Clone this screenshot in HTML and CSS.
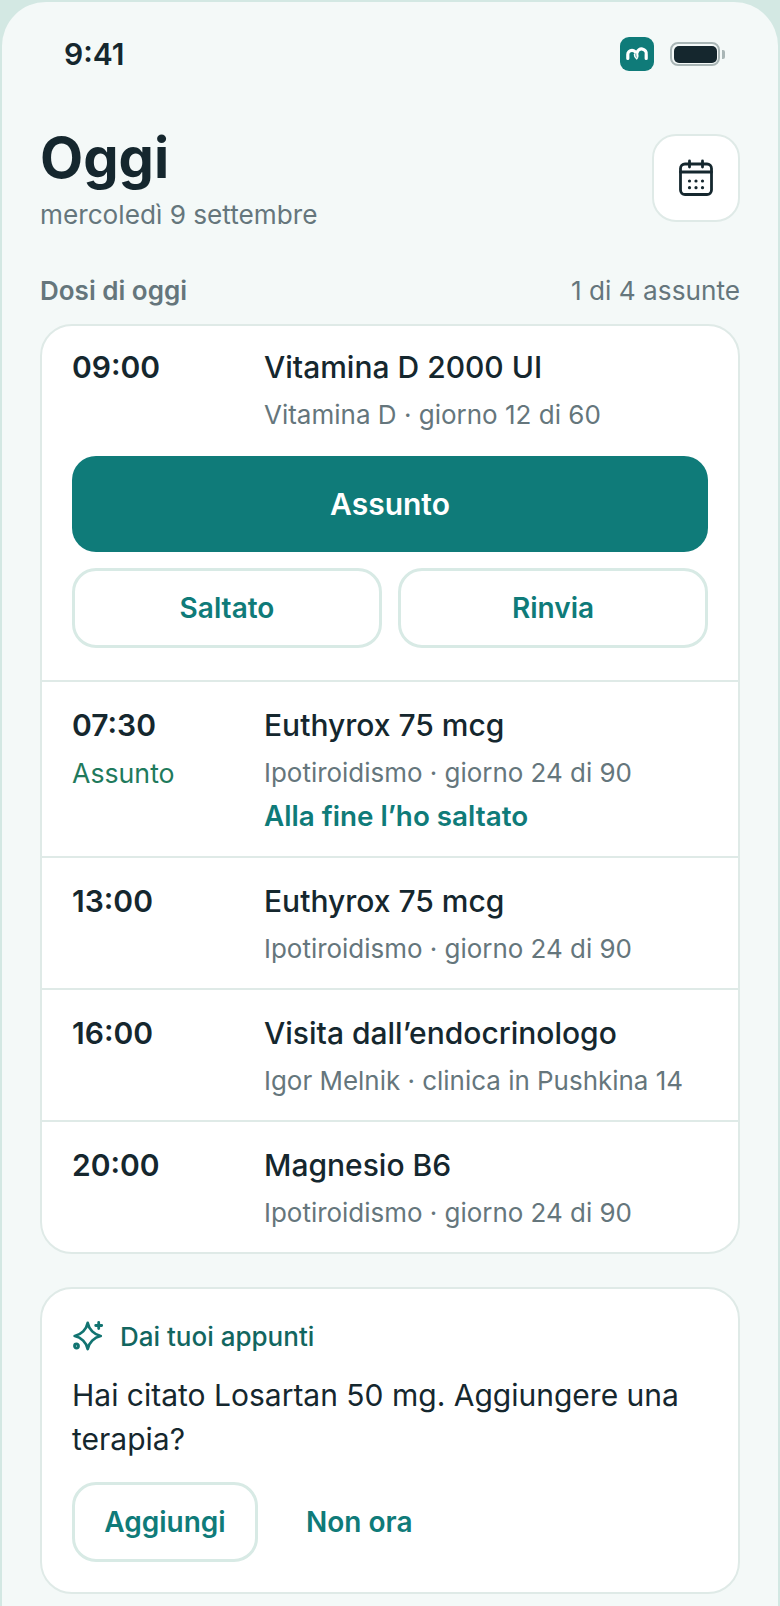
FILE: index.html
```html
<!DOCTYPE html>
<html lang="it">
<head>
    <meta charset="UTF-8">
    <meta name="viewport" content="width=device-width, initial-scale=1.0">
    <title>Oggi</title>
    <link rel="stylesheet" href="styles.css">
</head>
<body>
    <div class="phone">
        <div class="status-bar">
            <span class="clock">9:41</span>
            <div class="status-icons">
                <span class="app-badge">
                    <svg width="24" height="16" viewBox="0 0 24 16" fill="none" stroke="#fff" stroke-width="3.200" stroke-linecap="round">
                        <path d="M2.800 12.500V8.500a4.200 4.200 0 0 1 8.400 0"/>
                        <path d="M12 6.800a4.600 4.600 0 0 1 9.200 1.700v4"/>
                        <path d="M9.400 8.500c0 2 .8 3.400 2.300 4.300 1.200-1.300 1.500-3 .8-5" fill="#fff" stroke-width="1.400"/>
                        <path d="M10.800 7.800c-.1 1.500.1 2.500.7 3.400" stroke="#0f7b79" stroke-width=".8"/>
                    </svg>
                </span>
                <span class="battery"><span class="battery-fill"></span></span>
                <span class="battery-cap"></span>
            </div>
        </div>

        <header class="page-head">
            <div>
                <h1>Oggi</h1>
                <p class="date">mercoledì 9 settembre</p>
            </div>
            <button class="calendar-btn" aria-label="Calendario">
                <svg width="36" height="38" viewBox="0 0 36 38" fill="none" stroke="#15272e" stroke-width="2.800" stroke-linecap="round">
                    <rect x="2.500" y="5" width="31" height="30.500" rx="4.500"/>
                    <path d="M2.500 13h31"/>
                    <path d="M11.500 2v6M24.500 2v6"/>
                    <g fill="#15272e" stroke="none">
                        <circle cx="11.500" cy="22" r="1.600"/><circle cx="18" cy="22" r="1.600"/><circle cx="24.500" cy="22" r="1.600"/>
                        <circle cx="11.500" cy="28.700" r="1.600"/><circle cx="18" cy="28.700" r="1.600"/><circle cx="24.500" cy="28.700" r="1.600"/>
                    </g>
                </svg>
            </button>
        </header>

        <div class="section-head">
            <span class="section-title">Dosi di oggi</span>
            <span class="section-count">1 di 4 assunte</span>
        </div>

        <section class="card doses">
            <div class="dose dose-active">
                <div class="dose-row">
                    <div class="dose-time"><strong>09:00</strong></div>
                    <div class="dose-info">
                        <div class="dose-name">Vitamina D 2000 UI</div>
                        <div class="dose-sub">Vitamina D · giorno 12 di 60</div>
                    </div>
                </div>
                <button class="btn-primary">Assunto</button>
                <div class="btn-pair">
                    <button class="btn-outline">Saltato</button>
                    <button class="btn-outline">Rinvia</button>
                </div>
            </div>
            <div class="dose dose-row">
                <div class="dose-time">
                    <strong>07:30</strong>
                    <span class="taken">Assunto</span>
                </div>
                <div class="dose-info">
                    <div class="dose-name">Euthyrox 75 mcg</div>
                    <div class="dose-sub">Ipotiroidismo · giorno 24 di 90</div>
                    <a class="undo-link">Alla fine l’ho saltato</a>
                </div>
            </div>
            <div class="dose dose-row">
                <div class="dose-time"><strong>13:00</strong></div>
                <div class="dose-info">
                    <div class="dose-name">Euthyrox 75 mcg</div>
                    <div class="dose-sub">Ipotiroidismo · giorno 24 di 90</div>
                </div>
            </div>
            <div class="dose dose-row">
                <div class="dose-time"><strong>16:00</strong></div>
                <div class="dose-info">
                    <div class="dose-name">Visita dall’endocrinologo</div>
                    <div class="dose-sub">Igor Melnik · clinica in Pushkina 14</div>
                </div>
            </div>
            <div class="dose dose-row">
                <div class="dose-time"><strong>20:00</strong></div>
                <div class="dose-info">
                    <div class="dose-name">Magnesio B6</div>
                    <div class="dose-sub">Ipotiroidismo · giorno 24 di 90</div>
                </div>
            </div>
        </section>

        <section class="card note">
            <div class="note-head">
                <svg width="32" height="32" viewBox="0 0 32 32" fill="none" stroke="#127471" stroke-width="2.800" stroke-linecap="round" stroke-linejoin="round">
                    <path d="M15.700 3c1.200 6.500 6.500 11.500 13 13-6.500 1.500-11.800 6.500-13 13-1.200-6.500-6.500-11.500-13-13 6.500-1.500 11.800-6.500 13-13z"/>
                    <path d="M26.700 2.500v6M23.700 5.500h6"/>
                    <circle cx="4.500" cy="26" r="2"/>
                </svg>
                <span>Dai tuoi appunti</span>
            </div>
            <p class="note-text">Hai citato Losartan 50 mg. Aggiungere una terapia?</p>
            <div class="note-actions">
                <button class="btn-outline btn-add">Aggiungi</button>
                <button class="btn-text">Non ora</button>
            </div>
        </section>
    </div>
</body>
</html>
```

FILE: styles.css
```css
* {
    box-sizing: border-box;
}
body {
    margin: 0;
    background-color: #d3e8e3;
    font-family: Inter, "Liberation Sans", sans-serif;
    color: #15272e;
}
button {
    font-family: inherit;
    cursor: pointer;
}
.phone {
    height: 1604px;
    margin: 2px 2px 0;
    padding: 0 38px;
    background-color: #f4f9f8;
    border-radius: 44px 44px 0 0;
    overflow: hidden;
}
.status-bar {
    display: flex;
    justify-content: space-between;
    align-items: center;
    height: 77px;
    padding: 27px 0 0 24px;
}
.clock {
    font-size: 30px;
    font-weight: 600;
}
.status-icons {
    display: flex;
    align-items: center;
    margin-right: 15px;
}
.app-badge {
    display: flex;
    align-items: center;
    justify-content: center;
    width: 34px;
    height: 34px;
    background-color: #0f7b79;
    border-radius: 9px;
}
.battery {
    width: 50px;
    height: 24px;
    margin-left: 16px;
    padding: 1.500px;
    border: 2px solid #a9b6b6;
    border-radius: 8px;
}
.battery-fill {
    display: block;
    height: 100%;
    background-color: #15272e;
    border-radius: 5px;
}
.battery-cap {
    width: 3px;
    height: 9px;
    margin-left: 2px;
    background-color: #a9b6b6;
    border-radius: 0 2px 2px 0;
}
.page-head {
    display: flex;
    justify-content: space-between;
    align-items: flex-start;
    margin-top: 48px;
}
h1 {
    margin: 0;
    font-size: 56px;
    line-height: 62px;
    font-weight: 700;
}
.date {
    margin: 9px 0 0;
    font-size: 26.200px;
    line-height: 34px;
    color: #65767c;
}
.calendar-btn {
    display: flex;
    align-items: center;
    justify-content: center;
    width: 88px;
    height: 88px;
    margin-top: 7px;
    background: white;
    border: 2px solid #dfeae7;
    border-radius: 24px;
}
.section-head {
    display: flex;
    justify-content: space-between;
    align-items: center;
    margin-top: 43px;
    font-size: 26px;
    line-height: 32px;
    color: #65767c;
}
.section-title {
    font-weight: 600;
}
.section-count {
    font-size: 26.200px;
}
.card {
    background: white;
    border: 2px solid #dfeae7;
    border-radius: 32px;
}
.doses {
    margin-top: 17px;
}
.dose {
    padding: 24px 30px 20px;
    border-top: 2px solid #dfeae7;
}
.dose:first-child {
    border-top: none;
}
.dose-active {
    padding-top: 22px;
    padding-bottom: 32px;
}
.dose-active .dose-sub {
    margin-top: 9px;
    font-size: 26px;
}
.dose-row {
    display: flex;
}
.dose-time {
    display: flex;
    flex-direction: column;
    width: 192px;
    flex-shrink: 0;
}
.dose-time strong {
    font-size: 30px;
    line-height: 39px;
    font-weight: 600;
}
.taken {
    margin-top: 9px;
    font-size: 26.700px;
    line-height: 38px;
    color: #1f7a5c;
}
.dose-name {
    font-size: 30px;
    line-height: 39px;
    font-weight: 500;
}
.dose-sub {
    margin-top: 9px;
    font-size: 25.950px;
    line-height: 38px;
    color: #65767c;
}
.undo-link {
    display: block;
    margin-top: 5px;
    margin-bottom: 1px;
    font-size: 27.800px;
    line-height: 38px;
    font-weight: 600;
    color: #0f7b79;
}
.btn-primary {
    display: block;
    width: 100%;
    height: 96px;
    margin-top: 22px;
    background-color: #0f7b79;
    color: white;
    border: none;
    border-radius: 24px;
    font-size: 30px;
    font-weight: 600;
}
.btn-pair {
    display: grid;
    grid-template-columns: 1fr 1fr;
    gap: 16px;
    margin-top: 16px;
}
.btn-outline {
    height: 80px;
    background: white;
    color: #0f7b79;
    border: 3px solid #d8eae5;
    border-radius: 24px;
    font-size: 28px;
    font-weight: 600;
}
.note {
    margin-top: 33px;
    padding: 30px 30px 30px;
}
.note-head {
    display: flex;
    align-items: center;
    gap: 16px;
    height: 34px;
    font-size: 26px;
    font-weight: 500;
    color: #12665f;
}
.note-text {
    margin: 20px 0 0;
    font-size: 30px;
    line-height: 44px;
}
.note-actions {
    display: flex;
    align-items: center;
    gap: 16px;
    margin-top: 21px;
}
.btn-add {
    width: 186px;
}
.btn-text {
    padding: 0 32px;
    background: none;
    border: none;
    color: #0f7b79;
    font-size: 28px;
    font-weight: 600;
}
```
